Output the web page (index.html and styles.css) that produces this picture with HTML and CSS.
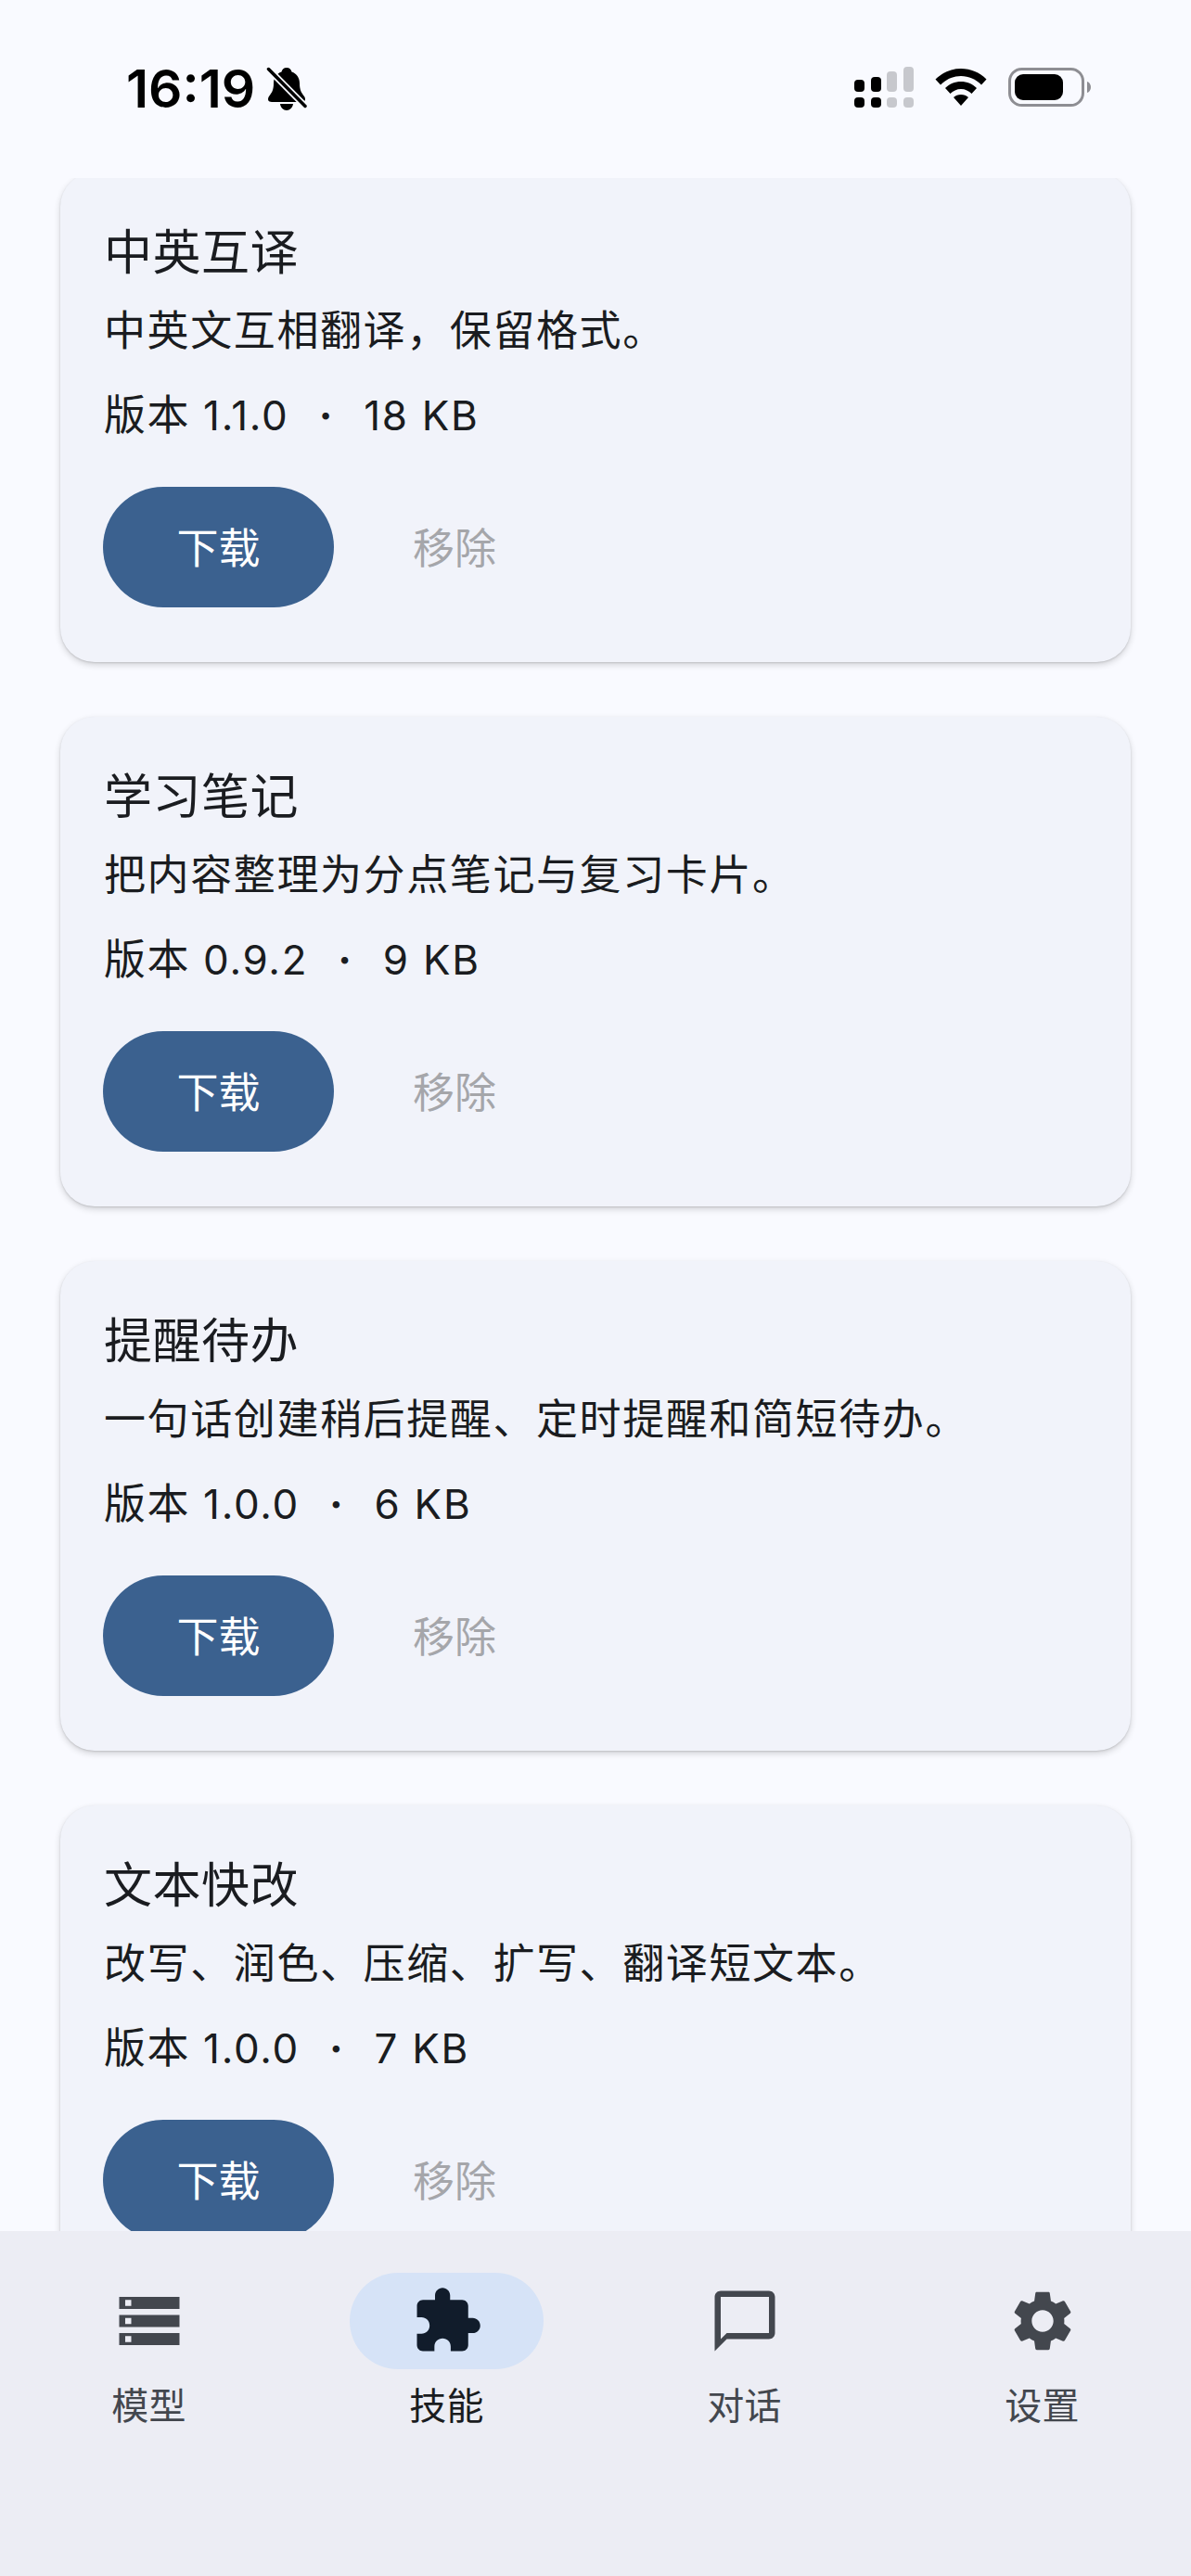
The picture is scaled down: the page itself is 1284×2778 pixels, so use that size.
FILE: index.html
```html
<!DOCTYPE html>
<html lang="zh-CN">
<head>
<meta charset="utf-8">
<title>技能</title>
<link rel="stylesheet" href="styles.css">
</head>
<body>
<div class="app">
  <header class="status">
    <div class="status-left">
      <span class="time">16:19</span>
      <svg class="bell" viewBox="0 0 44 48"><path d="M22 1c3 0 5 2 5.500 4.500C33 7.500 36 12 36 18c0 7 2 10 5 14 2 3 1 6-3 6H6c-4 0-5-3-3-6 3-4 5-7 5-14 0-6 3-10.500 8.500-12.500C17 3 19 1 22 1zM15 40h14c-.5 4-3.500 7-7 7s-6.500-3-7-7z" fill="#000"/><path d="M2.500 2.500 42 42.500" stroke="#f9faff" stroke-width="7"/><path d="M2.500 2.500 42 42.500" stroke="#000" stroke-width="3.500" stroke-linecap="round"/></svg>
    </div>
    <div class="status-right">
      <svg class="signal" viewBox="0 0 64 44">
        <g fill="#000"><rect x="0" y="14" width="11" height="13" rx="4"/><rect x="0" y="33" width="11" height="11" rx="4"/><rect x="18" y="11" width="11" height="16" rx="4"/><rect x="18" y="33" width="11" height="11" rx="4"/></g>
        <g fill="#c7c8cd"><rect x="35" y="5" width="11" height="22" rx="4"/><rect x="35" y="33" width="11" height="11" rx="4"/><rect x="53" y="0" width="11" height="27" rx="4"/><rect x="53" y="33" width="11" height="11" rx="4"/></g>
      </svg>
      <svg class="wifi" viewBox="0 0 56 40"><path d="M28 0c10.500 0 20 4 27.500 11.500l-5.500 6C44 11.500 36.500 8 28 8S12 11.500 6 17.500l-5.500-6C8 4 17.500 0 28 0zM28 14c6.500 0 12.500 2.500 17 7l-5.500 6C36.500 24 32.500 22 28 22s-8.500 2-11.500 5L11 21c4.500-4.500 10.500-7 17-7zM28 28c3 0 6 1 8 3L28 40l-8-9c2-2 5-3 8-3z" fill="#000"/></svg>
      <svg class="battery" viewBox="0 0 90 42"><rect x="1.500" y="1.500" width="79" height="39" rx="13" fill="none" stroke="#8e8e93" stroke-width="3"/><rect x="7" y="7" width="52" height="28" rx="9" fill="#000"/><path d="M85 15c2.500.8 4 3 4 6s-1.500 5.200-4 6z" fill="#8e8e93"/></svg>
    </div>
  </header>

  <main class="list">
    <article class="card">
      <h2 class="card-title">中英互译</h2>
      <p class="card-desc">中英文互相翻译，保留格式。</p>
      <p class="card-meta"><span class="meta-cjk">版本</span> 1.1.0 <span class="dot">·</span> 18 KB</p>
      <div class="actions"><button class="btn-primary">下载</button><button class="btn-text">移除</button></div>
    </article>
    <article class="card">
      <h2 class="card-title">学习笔记</h2>
      <p class="card-desc">把内容整理为分点笔记与复习卡片。</p>
      <p class="card-meta"><span class="meta-cjk">版本</span> 0.9.2 <span class="dot">·</span> 9 KB</p>
      <div class="actions"><button class="btn-primary">下载</button><button class="btn-text">移除</button></div>
    </article>
    <article class="card">
      <h2 class="card-title">提醒待办</h2>
      <p class="card-desc">一句话创建稍后提醒、定时提醒和简短待办。</p>
      <p class="card-meta"><span class="meta-cjk">版本</span> 1.0.0 <span class="dot">·</span> 6 KB</p>
      <div class="actions"><button class="btn-primary">下载</button><button class="btn-text">移除</button></div>
    </article>
    <article class="card">
      <h2 class="card-title">文本快改</h2>
      <p class="card-desc">改写、润色、压缩、扩写、翻译短文本。</p>
      <p class="card-meta"><span class="meta-cjk">版本</span> 1.0.0 <span class="dot">·</span> 7 KB</p>
      <div class="actions"><button class="btn-primary">下载</button><button class="btn-text">移除</button></div>
    </article>
  </main>

  <nav class="tabs">
    <div class="tab">
      <div class="tab-icon"><svg viewBox="0 0 24 24"><path d="M2 20h20v-4H2v4zm2-3h2v2H4v-2zM2 4v4h20V4H2zm4 3H4V5h2v2zm-4 7h20v-4H2v4zm2-3h2v2H4v-2z"/></svg></div>
      <span class="tab-label">模型</span>
    </div>
    <div class="tab tab-active">
      <div class="tab-icon"><svg viewBox="0 0 24 24"><path d="M20.500 11H19V7c0-1.100-.9-2-2-2h-4V3.500C13 2.120 11.880 1 10.500 1S8 2.120 8 3.500V5H4c-1.100 0-1.990.9-1.990 2v3.800H3.500c1.490 0 2.700 1.210 2.700 2.700s-1.210 2.700-2.700 2.700H2V20c0 1.100.9 2 2 2h3.800v-1.500c0-1.490 1.210-2.700 2.700-2.700 1.490 0 2.700 1.210 2.700 2.700V22H17c1.100 0 2-.9 2-2v-4h1.500c1.380 0 2.500-1.120 2.500-2.500S21.880 11 20.500 11z"/></svg></div>
      <span class="tab-label">技能</span>
    </div>
    <div class="tab">
      <div class="tab-icon"><svg viewBox="0 0 24 24"><path d="M20 2H4c-1.100 0-2 .9-2 2v18l4-4h14c1.100 0 2-.9 2-2V4c0-1.100-.9-2-2-2zm0 14H6l-2 2V4h16v12z"/></svg></div>
      <span class="tab-label">对话</span>
    </div>
    <div class="tab">
      <div class="tab-icon"><svg viewBox="0 0 24 24"><path d="M19.140 12.940c.04-.3.06-.61.06-.94 0-.32-.02-.64-.07-.94l2.030-1.580c.18-.14.23-.41.12-.61l-1.920-3.320c-.12-.22-.37-.29-.59-.22l-2.390.96c-.5-.38-1.030-.7-1.620-.94l-.36-2.540c-.04-.24-.24-.41-.48-.41h-3.840c-.24 0-.43.17-.47.41l-.36 2.540c-.59.24-1.130.57-1.620.94l-2.390-.96c-.22-.08-.47 0-.59.22L2.740 8.870c-.12.21-.08.47.12.61l2.030 1.580c-.05.3-.09.63-.09.94s.02.64.07.94l-2.030 1.580c-.18.14-.23.41-.12.61l1.920 3.320c.12.22.37.29.59.22l2.390-.96c.5.38 1.030.7 1.620.94l.36 2.540c.05.24.24.41.48.41h3.840c.24 0 .44-.17.47-.41l.36-2.540c.59-.24 1.130-.56 1.620-.94l2.390.96c.22.08.47 0 .59-.22l1.920-3.320c.12-.22.07-.47-.12-.61l-2.010-1.580zM12 15.600c-1.980 0-3.600-1.620-3.600-3.600s1.620-3.600 3.600-3.600 3.600 1.620 3.600 3.600-1.620 3.600-3.600 3.600z"/></svg></div>
      <span class="tab-label">设置</span>
    </div>
  </nav>
</div>
</body>
</html>
```
FILE: styles.css
```css
* { box-sizing: border-box; }
html, body { margin: 0; padding: 0; }
body {
  width: 1284px;
  height: 2778px;
  overflow: hidden;
  background: #f9faff;
  font-family: "Roboto", "Noto Sans CJK SC", sans-serif;
  color: #1a1c20;
}
.app { display: flex; flex-direction: column; height: 2778px; }

.status {
  flex: 0 0 192px;
  display: flex;
  justify-content: space-between;
  align-items: flex-start;
  padding: 71px 107px 0 136px;
}
.status-left { display: flex; align-items: center; gap: 12px; }
.time {
  font-family: "Inter", sans-serif;
  font-size: 57px;
  font-weight: 600;
  line-height: 50px;
  color: #000;
}
.bell { width: 44px; height: 48px; display: block; }
.status-right { display: flex; align-items: center; gap: 23px; padding-top: 1px; }
.signal { width: 64px; height: 44px; display: block; }
.wifi { width: 56px; height: 40px; display: block; }
.battery { width: 90px; height: 42px; display: block; }

.list {
  flex: 1 1 0;
  min-height: 0;
  overflow: hidden;
  padding: 0 65px;
  display: flex;
  flex-direction: column;
  gap: 59px;
}
.card {
  flex: 0 0 528px;
  background: #f1f3fa;
  border-radius: 37px;
  padding: 54px 46px 57px 47px;
  box-shadow: 0 3px 7px rgba(0, 0, 0, 0.16), 0 1px 2px rgba(0, 0, 0, 0.12);
}
.card:first-child { margin-top: -6px; }
.card-title {
  margin: 0;
  font-size: 52px;
  font-weight: 400;
  line-height: 68px;
  letter-spacing: 0.5px;
}
.card-desc {
  margin: 20px 0 0;
  font-size: 45px;
  line-height: 60px;
  letter-spacing: 1.6px;
}
.card-meta {
  margin: 30px 0 0;
  font-family: "Inter", "Noto Sans CJK SC", sans-serif;
  font-size: 44px;
  line-height: 60px;
  letter-spacing: 1.7px;
  white-space: pre-wrap;
}
.meta-cjk { font-size: 45px; letter-spacing: 1.5px; }
.dot { font-weight: 700; margin: 0 18px; }
.actions { display: flex; align-items: center; gap: 60px; margin: 47px 0 0 -1px; }
.btn-primary, .btn-text {
  font: inherit;
  font-size: 45px;
  border: 0;
  height: 130px;
  padding: 0 0 3px;
  background: none;
}
.btn-primary { width: 249px; border-radius: 65px; background: #3b618f; color: #fff; }
.btn-text { width: 140px; color: #a5a6aa; }

.tabs {
  flex: 0 0 372px;
  position: relative;
  background: #ecedf4;
  display: grid;
  grid-template-columns: repeat(4, 321px);
  padding-top: 45px;
}
.tab { display: flex; flex-direction: column; align-items: center; color: #43474e; }
.tab-icon {
  width: 209px;
  height: 104px;
  border-radius: 52px;
  display: flex;
  align-items: center;
  justify-content: center;
}
.tab-icon svg { width: 78px; height: 78px; fill: currentColor; display: block; }
.tab-label { font-size: 40px; line-height: 56px; margin-top: 13px; letter-spacing: 0.3px; }
.tab-active { color: #111c2b; }
.tab-active .tab-icon { background: #d6e3f7; }
.tab-active .tab-label { color: #1a1c20; }
```
